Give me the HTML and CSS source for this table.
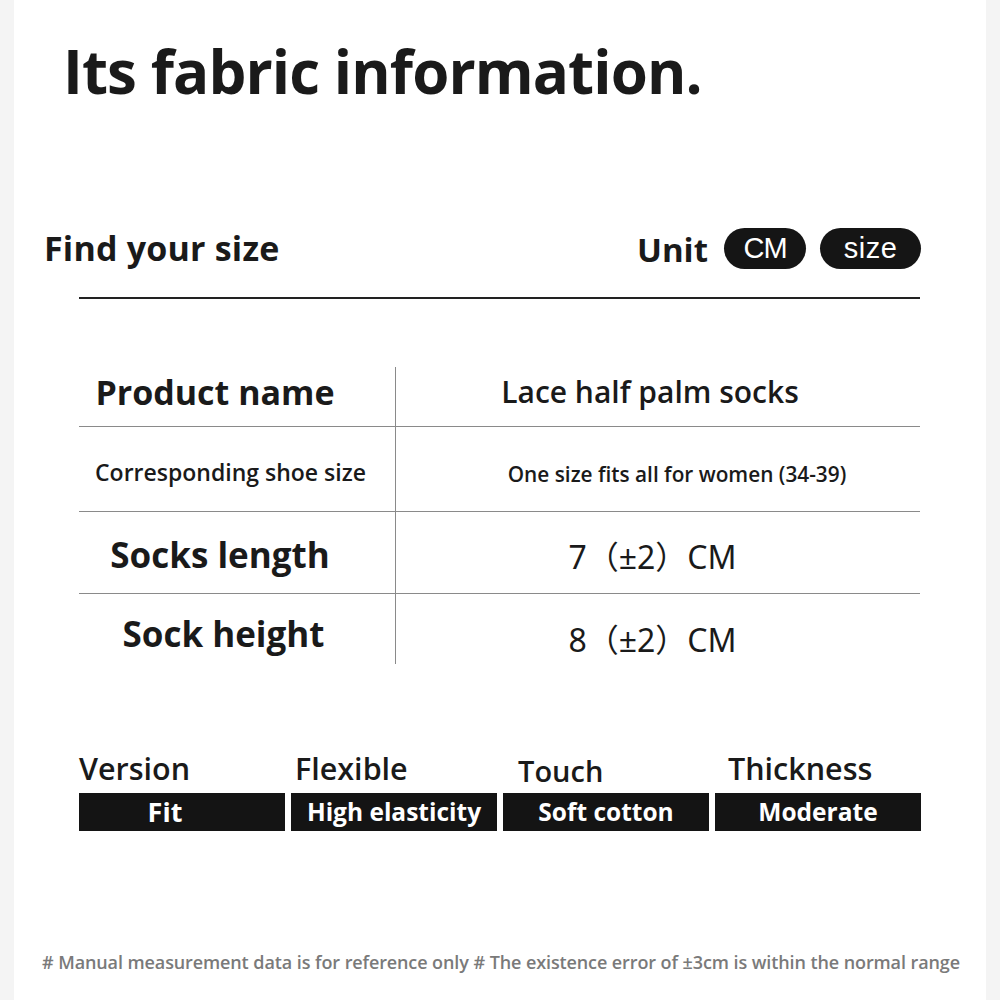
FILE: index.html
```html
<!DOCTYPE html>
<html lang="en">
<head>
<meta charset="utf-8">
<title>Its fabric information</title>
<link rel="stylesheet" href="styles.css">
</head>
<body>
<div class="page">
  <h1 class="title">Its fabric information.</h1>

  <div class="size-head">
    <h2 class="find">Find your size</h2>
    <div class="unit">
      <span class="unit-label">Unit</span>
      <span class="pill pill-cm">CM</span>
      <span class="pill pill-size">size</span>
    </div>
  </div>
  <div class="rule"></div>

  <div class="table">
    <div class="row row-1">
      <div class="cell key key-1">Product name</div>
      <div class="cell val val-1">Lace half palm socks</div>
    </div>
    <div class="row row-2">
      <div class="cell key key-2">Corresponding shoe size</div>
      <div class="cell val val-2">One size fits all for women (34-39)</div>
    </div>
    <div class="row row-3">
      <div class="cell key key-3">Socks length</div>
      <div class="cell val val-3">7（±2）CM</div>
    </div>
    <div class="row row-4">
      <div class="cell key key-4">Sock height</div>
      <div class="cell val val-4">8（±2）CM</div>
    </div>
  </div>

  <div class="attrs">
    <div class="attr">
      <div class="attr-label attr-label-1">Version</div>
      <div class="attr-bar attr-bar-fit">Fit</div>
    </div>
    <div class="attr">
      <div class="attr-label attr-label-2">Flexible</div>
      <div class="attr-bar">High elasticity</div>
    </div>
    <div class="attr">
      <div class="attr-label attr-label-3">Touch</div>
      <div class="attr-bar">Soft cotton</div>
    </div>
    <div class="attr">
      <div class="attr-label attr-label-4">Thickness</div>
      <div class="attr-bar">Moderate</div>
    </div>
  </div>

  <p class="note"># Manual measurement data is for reference only # The existence error of ±3cm is within the normal range</p>
</div>
</body>
</html>
```

FILE: styles.css
```css
html, body {
  margin: 0;
  padding: 0;
}
body {
  background: #f4f4f4;
  font-family: "Open Sans", "Noto Sans", "Noto Sans CJK SC", sans-serif;
  color: #1a1a1a;
}
.page {
  margin: 0 14px;
  width: 972px;
  height: 1000px;
  background: #fff;
  display: flex;
  flex-direction: column;
  overflow: hidden;
}
.title {
  margin: 0;
  height: 200px;
  padding: 31px 0 0 49px;
  box-sizing: border-box;
  font-size: 60px;
  line-height: 80px;
  font-weight: 700;
  letter-spacing: -0.9px;
}
.size-head {
  display: flex;
  justify-content: space-between;
  align-items: center;
  height: 96px;
  padding: 0 65px 0 30px;
}
.find {
  margin: 0;
  font-size: 34px;
  font-weight: 700;
  letter-spacing: 0.2px;
}
.unit {
  display: flex;
  align-items: center;
  gap: 14px;
}
.unit-label {
  font-size: 33px;
  font-weight: 700;
  margin-right: 2px;
  padding-top: 2px;
}
.pill {
  height: 41px;
  border-radius: 21px;
  background: #151515;
  color: #fff;
  display: flex;
  align-items: center;
  justify-content: center;
  font-family: "Liberation Sans", sans-serif;
  font-size: 29px;
}
.pill-cm { width: 82px; letter-spacing: -1px; }
.pill-size { width: 101px; letter-spacing: 0.5px; }
.rule {
  margin: 1px 66px 0 65px;
  height: 2px;
  background: #222;
}
.table {
  margin: 68px 66px 0 65px;
}
.row {
  display: grid;
  grid-template-columns: 317px 1fr;
  border-top: 1px solid #8a8a8a;
}
.row-1 { border-top: none; height: 59px; }
.row-2 { height: 84px; }
.row-3 { height: 81px; }
.row-4 { height: 70px; }
.cell {
  display: flex;
  align-items: center;
  justify-content: center;
  white-space: nowrap;
}
.key {
  border-right: 1px solid #8a8a8a;
  font-weight: 700;
}
.key-1 { font-size: 34px; padding-right: 44px; padding-bottom: 10px; }
.key-2 { font-size: 23px; font-weight: 600; padding-right: 13px; padding-top: 6px; }
.key-3 { font-size: 35px; padding-right: 34px; padding-top: 4px; }
.key-4 { font-size: 35px; padding-right: 27px; padding-top: 8px; }
.val-1 { font-size: 30px; font-weight: 600; padding-right: 16px; padding-bottom: 10px; }
.val-2 { font-size: 20.8px; font-weight: 600; padding-left: 38px; padding-top: 10px; }
.val-3, .val-4 {
  font-size: 32px;
  font-weight: 400;
  font-family: "Noto Sans", "Noto Sans CJK SC", sans-serif;
  padding-right: 11px;
}
.val-3 { padding-top: 4px; }
.val-4 { padding-top: 18px; }
.attrs {
  margin: 84px 65px 0 65px;
  display: grid;
  grid-template-columns: repeat(4, 1fr);
  column-gap: 6px;
}
.attr {
  display: flex;
  flex-direction: column;
}
.attr-label {
  box-sizing: border-box;
  font-size: 30.5px;
  font-weight: 600;
  height: 45px;
  line-height: 40px;
}
.attr-label-1 { padding-left: 0; }
.attr-label-2 { padding-left: 4px; }
.attr-label-3 { padding-left: 15px; padding-top: 3px; font-size: 29px; }
.attr-label-4 { padding-left: 13px; }
.attr-bar {
  height: 38px;
  background: #141414;
  color: #fff;
  font-size: 24.5px;
  font-weight: 700;
  display: flex;
  align-items: center;
  justify-content: center;
  padding-bottom: 1px;
  box-sizing: border-box;
}
.attr-bar-fit { padding-right: 34px; font-size: 27px; }
.note {
  margin: 119px 0 0 28px;
  font-size: 18px;
  font-weight: 600;
  color: #7a7a7a;
  letter-spacing: -0.13px;
  word-spacing: 0.2px;
  white-space: nowrap;
}
```
